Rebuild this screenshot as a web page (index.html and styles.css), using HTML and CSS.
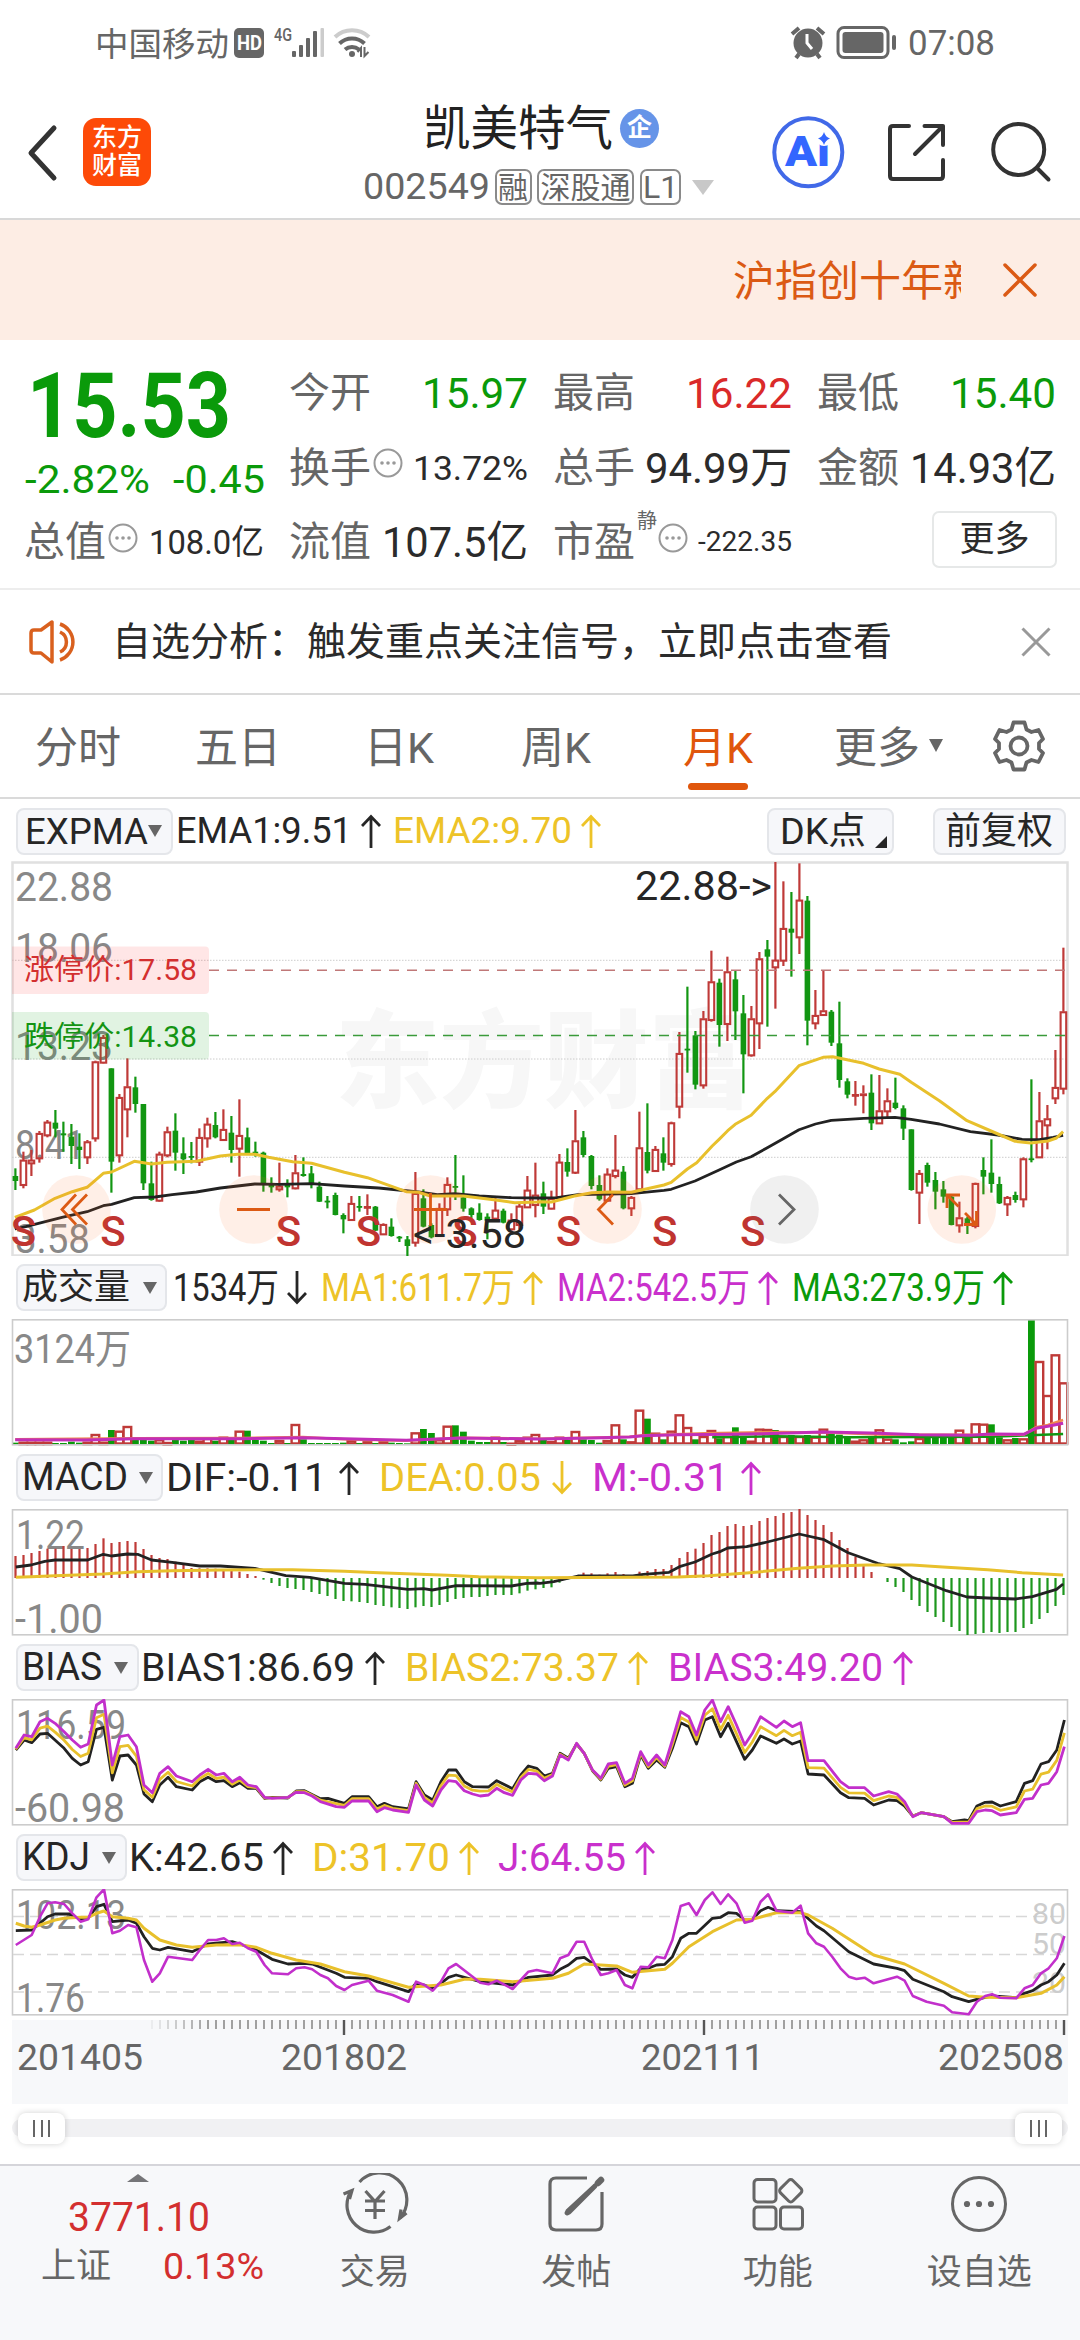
FILE: index.html
```html
<!DOCTYPE html>
<html lang="zh-CN">
<head>
<meta charset="utf-8">
<title>凯美特气 002549</title>
<link rel="stylesheet" href="styles.css">
</head>
<body>
<div class="status">
  <span class="carrier">中国移动</span>
  <span class="hd"><span class="fit" data-w="25">HD</span></span>
  <svg class="net" width="100" height="36" viewBox="272 24 100 36">
    <text class="net-4g" x="274" y="41" textLength="18" lengthAdjust="spacingAndGlyphs">4G</text>
    <g fill="#666"><rect x="292" y="51" width="4" height="6" rx="1"/><rect x="299" y="45" width="4" height="12" rx="1"/><rect x="306" y="38" width="4" height="19" rx="1"/><rect x="313" y="31" width="4" height="26" rx="1"/></g>
    <rect x="320.500" y="28" width="3.500" height="29" rx="1" fill="#ccc"/>
    <g fill="none" stroke-width="4">
      <path d="M335 37a25 25 0 0 1 34 0" stroke="#ccc"/><path d="M339.500 43.500a18 18 0 0 1 25 0" stroke="#666"/><path d="M345 49.500a11 11 0 0 1 14 0" stroke="#666"/>
    </g>
    <circle cx="352" cy="54" r="3" fill="#666"/>
    <path d="M357.500 52l3.500-4v9M364.500 47v9l4-4" stroke="#666" stroke-width="2" fill="none"/>
  </svg>
  <span class="grow"></span>
  <svg width="110" height="36" viewBox="786 24 110 36">
    <circle cx="806" cy="43" r="14.500" fill="#666"/>
    <path d="M790 34l7-6M822 34l-7-6M797 54l-3 4M815 54l3 4" stroke="#666" stroke-width="4" fill="none"/>
    <path d="M805 34v9l5 6" stroke="#fff" stroke-width="3" fill="none"/>
    <rect x="836" y="27.500" width="50" height="30" rx="6" fill="none" stroke="#666" stroke-width="3"/>
    <rect x="840.500" y="32" width="41" height="21" rx="3" fill="#666"/>
    <rect x="890" y="35" width="4" height="15" rx="2" fill="#666"/>
  </svg>
  <span class="clock"><span class="fit" data-w="87">07:08</span></span>
</div>

<header class="head">
  <svg class="back" width="32" height="60" viewBox="0 0 32 60"><path d="M28 5L5 30L28 55" fill="none" stroke="#333" stroke-width="5" stroke-linecap="round" stroke-linejoin="round"/></svg>
  <div class="logo">东方<br>财富</div>
  <div class="title">
    <div class="name">凯美特气<span class="corp">企</span></div>
    <div class="code"><span class="fit" data-w="127">002549</span><b>融</b><b>深股通</b><b class="l1">L1</b><i></i></div>
  </div>
  <svg class="acts" width="290" height="90" viewBox="765 107 290 90">
    <circle cx="808.300" cy="152.300" r="34" fill="#fff" stroke="#4169e8" stroke-width="4"/>
    <text class="ai" x="785" y="166" textLength="45" lengthAdjust="spacingAndGlyphs">Ai</text>
    <circle cx="824" cy="138" r="8" fill="#fff"/>
    <path d="M824 132q1.500 5 6 6.500q-4.500 1.500-6 6.500q-1.500-5-6-6.500q4.500-1.500 6-6.500z" fill="#3366ff"/>
    <g fill="none" stroke="#333" stroke-width="4" stroke-linecap="round" stroke-linejoin="round">
      <path d="M909 126H893Q890 126 890 129V176Q890 179 893 179H940Q943 179 943 176V160"/>
      <path d="M924.500 126H943V145M943 126L915 154"/>
      <circle cx="1018.700" cy="149.500" r="25.500"/><path d="M1037 168L1048.500 179.500"/>
    </g>
  </svg>
</header>

<div class="banner">
  <div class="marquee">沪指创十年新高</div>
  <svg width="34" height="34" viewBox="0 0 34 34"><path d="M2 2L32 32M32 2L2 32" stroke="#db5a14" stroke-width="3.500" stroke-linecap="round"/></svg>
</div>

<section class="quote">
  <div class="c1">
    <div class="price"><span class="fit" data-w="204">15.53</span></div>
    <div class="chg"><span class="fit" data-w="125">-2.82%</span><span class="fit" data-w="92">-0.45</span></div>
    <div class="cell"><label>总值</label><svg class="dot"><use href="#more"/></svg><span class="v sm fit" data-w="115">108.0亿</span></div>
  </div>
  <div class="stats">
    <div class="cell"><label>今开</label><span class="v g fit" data-w="106">15.97</span></div>
    <div class="cell"><label>最高</label><span class="v r fit" data-w="106">16.22</span></div>
    <div class="cell"><label>最低</label><span class="v g fit" data-w="106">15.40</span></div>
    <div class="cell"><label>换手</label><svg class="dot"><use href="#more"/></svg><span class="v sm fit" data-w="115">13.72%</span></div>
    <div class="cell"><label>总手</label><span class="v fit" data-w="147">94.99万</span></div>
    <div class="cell"><label>金额</label><span class="v fit" data-w="146">14.93亿</span></div>
    <div class="cell"><label>流值</label><span class="v fit" data-w="146">107.5亿</span></div>
    <div class="cell"><label>市盈</label><sup>静</sup><svg class="dot"><use href="#more"/></svg><span class="v xs fit" data-w="94">-222.35</span></div>
    <div class="cell"><span class="morebtn">更多</span></div>
  </div>
</section>

<div class="notice">
  <svg width="56" height="50" viewBox="26 617 56 50" fill="none" stroke="#d9601e" stroke-width="3.500" stroke-linejoin="round"><path d="M52 622V662L41 653H34Q31 653 31 650V633Q31 630 34 630H41Z"/><path d="M60 624A19 19 0 0 1 60 660M60 632A11 11 0 0 1 60 652"/></svg>
  <p>自选分析：触发重点关注信号，立即点击查看</p>
  <svg width="32" height="32" viewBox="0 0 32 32"><path d="M2.500 2.500L29.500 29.500M29.500 2.500L2.500 29.500" stroke="#999" stroke-width="3"/></svg>
</div>

<nav class="tabs">
  <span>分时</span><span>五日</span><span>日K</span><span>周K</span><span class="on">月K</span><span class="mo">更多<i></i></span>
  <svg width="54" height="54" viewBox="-27 -27 54 54" fill="none" stroke="#666" stroke-width="3.800" stroke-linejoin="round"><path d="M-5.500 -23.500H5.500L7.500 -16.500L12.500 -14L19.500 -16L24 -7L20 -3V3L24 7L19.500 16L12.500 14L7.500 16.500L5.500 23.500H-5.500L-7.500 16.500L-12.500 14L-19.500 16L-24 7L-20 3V-3L-24 -7L-19.500 -16L-12.500 -14L-7.500 -16.500Z"/><circle r="8.500"/></svg>
</nav>

<main>
  <div class="legend l-expma">
    <span class="pill"><span class="fit" data-w="123">EXPMA</span><i></i></span>
    <div class="reads"><span class="k"><span class="fit" data-w="176">EMA1:9.51</span><svg class="ar"><use href="#up"/></svg></span><span class="y"><span class="fit" data-w="179">EMA2:9.70</span><svg class="ar"><use href="#up"/></svg></span></div>
    <span class="pill dk"><span class="fit" data-w="86">DK点</span><u></u></span><span class="pill fq"><span class="fit" data-w="108">前复权</span></span>
  </div>
  <svg class="panel" id="kline" width="1080" height="395" viewBox="0 861 1080 395"></svg>
  <div class="legend l-vol">
    <span class="pill"><span class="fit" data-w="108">成交量</span><i></i></span>
    <div class="reads"><span class="k"><span class="fit" data-w="106">1534万</span><svg class="ar"><use href="#down"/></svg></span><span class="y"><span class="fit" data-w="194">MA1:611.7万</span><svg class="ar"><use href="#up"/></svg></span><span class="m"><span class="fit" data-w="193">MA2:542.5万</span><svg class="ar"><use href="#up"/></svg></span><span class="g"><span class="fit" data-w="193">MA3:273.9万</span><svg class="ar"><use href="#up"/></svg></span></div>
  </div>
  <svg class="panel" id="vol" width="1080" height="127" viewBox="0 1319 1080 127"></svg>
  <div class="legend l-macd">
    <span class="pill"><span class="fit" data-w="106">MACD</span><i></i></span>
    <div class="reads"><span class="k"><span class="fit" data-w="161">DIF:-0.11</span><svg class="ar"><use href="#up"/></svg></span><span class="y"><span class="fit" data-w="162">DEA:0.05</span><svg class="ar"><use href="#down"/></svg></span><span class="m"><span class="fit" data-w="137">M:-0.31</span><svg class="ar"><use href="#up"/></svg></span></div>
  </div>
  <svg class="panel" id="macd" width="1080" height="127" viewBox="0 1509 1080 127"></svg>
  <div class="legend l-bias">
    <span class="pill"><span class="fit" data-w="80">BIAS</span><i></i></span>
    <div class="reads"><span class="k"><span class="fit" data-w="214">BIAS1:86.69</span><svg class="ar"><use href="#up"/></svg></span><span class="y"><span class="fit" data-w="214">BIAS2:73.37</span><svg class="ar"><use href="#up"/></svg></span><span class="m"><span class="fit" data-w="215">BIAS3:49.20</span><svg class="ar"><use href="#up"/></svg></span></div>
  </div>
  <svg class="panel" id="bias" width="1080" height="127" viewBox="0 1699 1080 127"></svg>
  <div class="legend l-kdj">
    <span class="pill"><span class="fit" data-w="68">KDJ</span><i></i></span>
    <div class="reads"><span class="k"><span class="fit" data-w="135">K:42.65</span><svg class="ar"><use href="#up"/></svg></span><span class="y"><span class="fit" data-w="138">D:31.70</span><svg class="ar"><use href="#up"/></svg></span><span class="m"><span class="fit" data-w="128">J:64.55</span><svg class="ar"><use href="#up"/></svg></span></div>
  </div>
  <svg class="panel" id="kdj" width="1080" height="127" viewBox="0 1889 1080 127"></svg>
  <svg class="panel" id="axis" width="1080" height="88" viewBox="0 2016 1080 88"></svg>
  <div class="slider"><div class="track"><span class="knob"><i></i><i></i><i></i></span><span class="knob"><i></i><i></i><i></i></span></div></div>
</main>

<footer class="bottom">
  <div class="index">
    <i></i>
    <div class="pt"><span class="fit" data-w="142">3771.10</span></div>
    <div class="sz"><em>上证</em><span class="fit" data-w="101">0.13%</span></div>
  </div>
  <div class="act">
    <svg width="70" height="62" viewBox="-35 -31 70 62" fill="none" stroke="#666" stroke-width="3.200"><path d="M-15.500 -22A27 27 0 0 1 25 14M15.500 22.500A27 27 0 0 1 -24 -13"/><path d="M31.500 9L24.500 14.500L26 5.500M-31.500 -10L-23 -13.500L-25.500 -5"/><path d="M-9.500 -13L0 -2.500L9.500 -13M0 -2.500V15M-10 -3H10M-10 6.500H10"/></svg>
    <span>交易</span>
  </div>
  <div class="act">
    <svg width="62" height="62" viewBox="-31 -31 62 62" fill="none" stroke="#666" stroke-width="3.200"><path d="M11 -26H-20Q-26 -26 -26 -20V20Q-26 26 -20 26H20Q26 26 26 20V-12"/><path d="M19 -18L-7 8L-9 9L-8 7Z" stroke-width="5" fill="#666" stroke-linejoin="round"/><path d="M22 -21L25 -24" stroke-width="6.500" stroke-linecap="round"/></svg>
    <span>发帖</span>
  </div>
  <div class="act">
    <svg width="62" height="62" viewBox="-31 -31 62 62" fill="none" stroke="#666" stroke-width="3"><rect x="-24" y="-24.500" width="22" height="22.500" rx="3.500"/><rect x="-24" y="3" width="22" height="22" rx="3.500"/><rect x="2.500" y="3" width="22" height="22" rx="3.500"/><rect x="4" y="-22" width="17.500" height="17.500" rx="3" transform="rotate(45 12.750 -13.250)"/></svg>
    <span>功能</span>
  </div>
  <div class="act">
    <svg width="62" height="62" viewBox="-31 -31 62 62"><circle r="26.500" fill="none" stroke="#666" stroke-width="3"/><g fill="#666"><circle cx="-12" r="3.100"/><circle r="3.100"/><circle cx="12" r="3.100"/></g></svg>
    <span>设自选</span>
  </div>
</footer>

<svg class="defs" width="0" height="0">
  <symbol id="up" viewBox="0 0 20 34"><path d="M10 34V3M1 12L10 2.500L19 12" fill="none" stroke="currentColor" stroke-width="2.800"/></symbol>
  <symbol id="down" viewBox="0 0 20 34"><path d="M10 0V31M1 22L10 31.500L19 22" fill="none" stroke="currentColor" stroke-width="2.800"/></symbol>
  <symbol id="more" viewBox="0 0 30 30"><circle cx="15" cy="15" r="13.500" fill="none" stroke="#999" stroke-width="2"/><g fill="#999"><circle cx="9" cy="15" r="1.800"/><circle cx="15" cy="15" r="1.800"/><circle cx="21" cy="15" r="1.800"/></g></symbol>
</svg>
<script src="charts.js"></script>
</body>
</html>
```
FILE: styles.css
```css
* { box-sizing: border-box; }
body { margin: 0; width: 1080px; height: 2340px; overflow: hidden; background: #fff; color: #2b2b2b; font-family: Roboto, "Noto Sans CJK SC", sans-serif; }
svg { display: block; flex: none; }
i, em { font-style: normal; }
.defs { position: absolute; }
.fit { display: inline-block; white-space: nowrap; transform-origin: 0 50%; flex: none; }
.grow { flex: 1; }
.g { color: #0a9a0a; }
.r { color: #da2a2a; }
.k { color: #262626; }
.y { color: #edc328; }
.m { color: #c930cc; }

.status { height: 88px; padding: 0 85px 0 95px; display: flex; align-items: center; color: #666; }
.carrier { font-size: 33.500px; line-height: 40px; width: 139px; margin-top: 1px; }
.hd { width: 30px; height: 30px; border-radius: 5px; background: #666; color: #fff; font-size: 20px; font-weight: 700; line-height: 30px; padding-left: 2.500px; margin: -2px 8px 0 0; }
.net { margin-top: -2px; }
.net-4g { font-size: 19px; font-weight: 500; fill: #666; }
.status svg { margin-top: -4px; }
.clock { font-size: 35px; line-height: 40px; margin-left: 10px; }

.head { height: 132px; border-bottom: 2px solid #d8d8d8; display: flex; align-items: flex-start; padding-left: 26px; }
.back { margin-top: 35px; }
.logo { margin: 30px 0 0 25px; width: 68px; height: 68px; border-radius: 13px; background: #fd4a08; color: #fff; font-size: 25px; font-weight: 500; line-height: 28px; text-align: center; padding-top: 6px; }
.title { width: 350px; margin: 13px 0 0 212px; }
.name { display: flex; align-items: center; font-size: 47.500px; line-height: 56px; color: #222; padding-left: 60px; }
.corp { width: 39px; height: 39px; border-radius: 50%; background: #6694e8; color: #fff; font-size: 25px; font-weight: 700; line-height: 38px; text-align: center; margin: -2px 0 0 7px; }
.code { display: flex; align-items: center; font-size: 37px; line-height: 40px; color: #666; margin-top: 10px; white-space: nowrap; }
.code b { flex: none; font-weight: 400; font-size: 30px; height: 36px; line-height: 33px; border: 2px solid #8a8a8a; border-radius: 7px; padding: 0 1.500px; margin-left: 5.500px; }
.code .fit { margin-right: -1px; }
.code .l1 { width: 41px; text-align: center; font-size: 32px; }
.code i { border: 11px solid transparent; border-top: 15px solid #c8c8c8; border-bottom: 0; margin-left: 11px; }
.acts { margin: 19px 0 0 52px; }
.ai { font-size: 42px; font-weight: 900; fill: #3366ff; }

.banner { height: 120px; background: #fdede4; display: flex; align-items: center; padding-left: 733px; color: #db5a14; }
.marquee { width: 228px; overflow: hidden; white-space: nowrap; font-size: 42px; line-height: 60px; margin: 3px 42px 0 0; }

.quote { height: 250px; border-bottom: 2px solid #ededed; display: flex; }
.c1 { width: 289px; padding-left: 25px; }
.price { font-size: 90px; font-weight: 700; line-height: 96px; color: #0a9a0a; margin: 19px 0 0 2px; }
.chg { display: flex; justify-content: space-between; width: 240px; font-size: 39px; line-height: 50px; margin: 0 0 0 0; color: #0a9a0a; }
.stats { display: grid; grid-template-columns: 238px 238px 238px; column-gap: 26px; grid-auto-rows: 74.500px; margin-top: 16px; height: 224px; }
.cell { display: flex; align-items: center; height: 74px; }
.c1 .cell { width: 239px; margin-left: -1px; }
.cell label { font-size: 41px; line-height: 60px; color: #666; }
.v { margin: 0 -1px 0 auto; font-size: 43px; line-height: 60px; }
.sm { font-size: 34px; }
.xs { font-size: 28px; }
.dot { width: 30px; height: 30px; margin: -9px 0 0 2px; }
.cell sup { font-size: 20px; line-height: 20px; align-self: flex-start; margin: 6px 0 0 2px; color: #666; }
.cell sup + .dot { margin-left: 1px; }
.morebtn { width: 125px; height: 57px; margin: -6px -2px 0 auto; border: 2px solid #e6e8e8; border-radius: 7px; font-size: 35px; line-height: 54px; text-align: center; }

.notice { height: 105px; border-bottom: 2px solid #dadada; display: flex; align-items: center; padding-left: 26px; }
.notice p { margin: 1px 0 0 30px; width: 908px; font-size: 39px; line-height: 56px; }

.tabs { height: 104px; border-bottom: 2px solid #dadada; display: flex; align-items: center; font-size: 43px; line-height: 64px; color: #666; padding-left: 35px; }
.tabs span { width: 163px; height: 60px; }
.tabs span:nth-child(1) { width: 160px; }
.tabs span:nth-child(2) { width: 169px; }
.tabs span:nth-child(3) { width: 157px; }
.tabs span:nth-child(4) { width: 162px; }
.tabs .on { width: 151px; color: #e0560c; }
.tabs .on::after { content: ""; display: block; width: 60px; height: 7px; border-radius: 4px; background: #e0560c; margin: 3px 0 0 5px; }
.tabs .mo { display: flex; align-items: center; width: 158px; padding-top: 3px; }
.mo i { border: 7.500px solid transparent; border-top: 13px solid #666; border-bottom: 0; margin: -5px 0 0 9px; }

.legend { height: 63px; display: flex; align-items: center; padding-left: 16px; font-size: 39px; line-height: 46px; }
.l-expma { font-size: 37px; height: 62px; padding-top: 2px; }
.pill { height: 47px; border: 2px solid #e4e6ea; border-radius: 8px; background: #f6f7fa; display: flex; align-items: center; padding-left: 4px; color: #262626; line-height: 43px; }
.pill i { border: 7.500px solid transparent; border-top: 12px solid #666; border-bottom: 0; }
.reads, .reads > span { display: flex; align-items: center; }
.ar { width: 20px; height: 34px; }
.l-expma .pill:first-child { width: 157px; padding-left: 7px; }
.l-expma .reads { margin-left: 3px; gap: 12px; width: 591px; }
.l-expma .reads > span { gap: 9px; }
.l-expma .dk { width: 127px; padding-left: 11px; }
.l-expma .dk u { border-left: 12px solid transparent; border-bottom: 12px solid #262626; margin: 22px 0 0 9px; }
.l-expma .fq { width: 133px; padding-left: 10px; margin-left: 39px; }
.l-vol .pill { width: 151px; font-size: 35px; }
.l-vol .pill i { margin-left: 13px; }
.l-vol .reads { margin-left: 6px; gap: 14.500px; }
.l-vol .reads > span { gap: 7.500px; }
.l-macd .pill { width: 147px; font-size: 38px; }
.l-macd .pill i { margin-left: 11px; }
.l-macd .reads { margin-left: 3px; gap: 20px; }
.l-macd .reads > span { gap: 11.500px; }
.l-bias .pill { width: 123px; font-size: 38px; }
.l-bias .pill i { margin-left: 12px; }
.l-bias .reads { margin-left: 2px; gap: 20px; }
.l-bias .reads > span { gap: 9.500px; }
.l-kdj .pill { width: 111px; font-size: 38px; }
.l-kdj .pill i { margin-left: 12px; }
.l-kdj .reads { margin-left: 2px; gap: 19px; }
.l-kdj .reads > span { gap: 9px; }

.panel text { font-size: 40px; fill: #888; }
.panel .wm { font-size: 106px; font-weight: 900; fill: #f7f7f7; }
.panel .lim { font-size: 29px; }
.panel .dark { fill: #262626; }
.panel .s { font-weight: 500; font-size: 42px; fill: #c03430; text-anchor: middle; }
.panel .lvl { font-size: 30px; fill: #ccc; }
.panel .date { font-size: 37px; fill: #666; }

.slider { height: 60px; padding: 15px 12px 0; }
.track { height: 18px; border-radius: 9px; background: #f1f1f3; display: flex; justify-content: space-between; align-items: center; padding: 0 6px; }
.knob { width: 47px; height: 31px; border-radius: 8px; background: #fff; box-shadow: 0 0 6px rgba(0,0,0,.18); display: flex; gap: 5.500px; justify-content: center; align-items: center; }
.knob i { width: 2px; height: 17px; background: #666; }

.bottom { height: 176px; border-top: 2px solid #d5d5da; background: #f7f8fa; display: flex; }
.index { width: 274px; }
.index > i { display: block; width: 0; border: 11px solid transparent; border-bottom: 8px solid #757578; border-top: 0; margin: 8px 0 0 127px; }
.pt { font-size: 41px; line-height: 50px; color: #d32f2f; margin: 10px 0 0 68px; }
.sz { display: flex; justify-content: space-between; width: 223px; margin: 0 0 0 41px; font-size: 36px; line-height: 50px; color: #d32f2f; }
.sz em { color: #666; font-size: 35px; }
.act { width: 201.500px; display: flex; flex-direction: column; align-items: center; padding-top: 7px; font-size: 35px; line-height: 50px; color: #666; }
.act span { margin-top: 13px; }
```
FILE: charts.js
```js
// Squeeze or stretch each marked label to its column width.
for (const el of document.querySelectorAll('.fit')) {
  const w = +el.dataset.w, n = el.getBoundingClientRect().width;
  el.style.width = w + 'px';
  el.style.transform = `scaleX(${w / n})`;
}

const RED = '#bf3a38', GREEN = '#129612';
const cx = i => 15.4 + 8 * i;
const K = 2.904;
const rect = (x, y, w, h, a) => `<rect x="${x.toFixed(2)}" y="${y.toFixed(2)}" width="${w.toFixed(2)}" height="${h.toFixed(2)}" ${a}/>`;
const text = (x, y, w, s, c = '') => `<text x="${x}" y="${y}" textLength="${w}" lengthAdjust="spacingAndGlyphs" class="${c}">${s}</text>`;
const put = (id, s) => { document.getElementById(id).innerHTML = s; };
const parse = s => s.trim().split(/\s+/).map(p => p.split(',').map(Number));
const scale = (s, x0, y0, k) => parse(s).map(([x, y]) => [x0 + x / k, y0 + y / 3]);
const line = (pts, c, w = 3) => `<polyline points="${pts.map(p => p[0].toFixed(1) + ',' + p[1].toFixed(1)).join(' ')}" fill="none" stroke="${c}" stroke-width="${w}" stroke-linejoin="round"/>`;
const frame = (y, h, c = '#ccc', w = 2) => rect(12.5, y, 1055, h, `fill="none" stroke="${c}" stroke-width="${w}"`);

// Monthly candles: direction, high, body top, body bottom, low.
const candles = `g955,978,993,1020 r905,930,1005,1015 r900,930,940,978 r843,850,925,938 r810,816,856,862 g780,818,836,862 g815,850,856,905 g822,860,888,942 g850,890,900,957 r870,875,922,942
r632,635,865,875 r555,562,638,640 g655,655,935,1028 r732,742,916,938 r625,710,778,862 g680,712,762,788 g762,762,1000,1020 g935,1000,1050,1052 r905,912,1052,1055 r830,845,916,922
g790,842,908,962 g862,910,928,972 g876,918,922,940 r835,862,935,948 r803,822,865,893 g786,825,862,865 r778,838,870,873 g798,848,900,938 r748,856,896,980 g833,862,910,912
g875,905,908,920 g905,908,1000,1025 g982,1005,1012,1028 r938,1008,1018,1025 g988,1005,1012,1042 r915,968,1015,1018 g922,972,978,980 g948,970,1000,1015 g995,1010,1055,1056 g1038,1052,1056,1075
g1028,1035,1095,1096 g1090,1095,1108,1150 r1038,1060,1110,1112 g1038,1068,1073,1085 r1033,1068,1073,1095 g1068,1070,1142,1143 r1120,1123,1153,1155 g1105,1130,1158,1160 g1158,1160,1164,1176 g1158,1168,1188,1218
r966,1030,1178,1190 g1018,1045,1130,1132 g1120,1125,1162,1165 r1060,1075,1158,1160 r982,1003,1078,1098 g915,1008,1012,1050 g976,1042,1076,1085 g1072,1075,1095,1110 g1060,1088,1110,1112 g1090,1100,1112,1168
r1043,1080,1106,1108 g1076,1082,1118,1120 r1090,1110,1138,1142 r1060,1068,1125,1138 r978,1020,1072,1073 r938,1035,1065,1102 g995,1030,1070,1092 r1022,1045,1076,1078 r912,936,1042,1045 g895,936,965,980
r780,872,968,972 g843,862,915,922 g915,918,1008,1018 g976,1005,1048,1052 r955,972,1052,1055 r855,960,978,985 g948,965,1075,1078 r1038,1042,1075,1098 r785,893,1018,1020 g760,906,962,970
r888,898,963,965 g862,910,938,962 r815,818,942,950 r546,610,770,805 g410,596,600,668 g543,556,704,718 r483,506,706,716 r302,395,510,515 g386,398,525,590 r320,365,522,573
g363,388,484,570 g435,490,613,730 r468,506,616,620 r306,326,520,597 g270,298,320,530 r36,330,352,476 r94,235,332,348 g126,236,248,380 r40,150,262,312 g138,152,512,586
r420,496,520,538 r362,482,495,498 g480,485,578,588 g455,580,690,713 g685,694,734,745 r693,732,738,767 r706,730,736,790 g673,728,820,840 r675,782,820,822 r715,752,784,805
g683,758,774,778 g766,775,836,870 g838,838,1020,1022 r960,970,1028,1122 g938,945,998,1010 g966,990,1025,1078 g993,1018,1040,1058 g1035,1040,1125,1126 r1055,1103,1126,1148 g1100,1105,1120,1152
r998,1000,1128,1135 g922,960,980,1033 g868,968,1002,1028 g980,1002,1060,1062 r1038,1042,1063,1098 g1025,1035,1050,1058 r922,926,1048,1072 g688,925,930,937 r726,812,922,924 r765,806,826,898 r600,712,745,762 r293,485,716,733`
  .trim().split(/\s+/).map(s => [s[0], ...s.slice(1).split(',').map(Number)]);

const join = (a, b, y0) => scale(a, 0, y0, K).concat(scale(b, 540, y0, K));

// ---- Price panel
{
  let s = text(335, 1099, 418, '东方财富', 'wm');
  s += frame(862.5, 393, '#e0e0e0', 2.5);
  for (const y of [960.3, 1059, 1157.3]) s += `<path d="M12 ${y}H1067" stroke="#ccc" stroke-width="1" stroke-dasharray="1.5 1.5"/>`;
  s += text(15, 901, 98, '22.88') + text(15, 962, 98, '18.06') + text(15, 1060, 98, '13.23') + text(15, 1158.5, 70, '8.41') + text(15, 1253, 75, '3.58');
  candles.forEach(([c, h, t, b, l], i) => {
    const x = cx(i), Y = v => 850 + v / 3, col = c === 'r' ? RED : GREEN;
    if (c === 'g') {
      s += rect(x - 1.1, Y(h), 2.2, (l - h) / 3, `fill="${col}"`) + rect(x - 2.8, Y(t), 5.6, Math.max(1.8, (b - t) / 3), `fill="${col}"`);
    } else {
      s += rect(x - 1.1, Y(h), 2.2, (t - h) / 3, `fill="${col}"`) + rect(x - 1.1, Y(b), 2.2, (l - b) / 3, `fill="${col}"`);
      s += b - t < 9 ? rect(x - 3.6, Y(t), 7.2, 2.8, `fill="${col}"`) : rect(x - 2.8, Y(t) + .6, 5.6, (b - t) / 3 - .6, `fill="none" stroke="${col}" stroke-width="2.1"`);
    }
  });
  s += line(join('43,1137 75,1130 180,1102 253,1085 300,1067 324,1063 390,1043 450,1041 500,1034 570,1026 640,1014 740,1002 810,1003 905,1001 1000,1008 1100,1014 1215,1026 1270,1034 1320,1031 1392,1038 1485,1043 1560,1044',
    '0,1044 50,1043 110,1034 200,1032 265,1031 360,1021 381,1018 450,993 520,960 570,936 613,920 660,893 705,867 752,839 800,822 846,811 940,805 1031,802 1078,808 1160,822 1250,845 1330,855 1400,868 1450,869 1490,862 1519,856', 850), '#222', 2.8);
  s += line(join('43,1102 100,1080 160,1045 210,1025 253,1012 300,970 324,966 390,934 440,942 485,937 570,934 640,918 690,913 740,913 780,922 850,935 905,940 1000,967 1067,983 1180,1025 1215,1027 1250,1038 1345,1038 1440,1050 1495,1058 1560,1056',
    '0,1055 33,1056 100,1038 150,1028 200,1026 265,1027 360,1005 381,997 428,957 455,938 500,888 520,868 545,842 567,823 613,796 660,745 682,725 752,647 822,622 850,620 940,640 985,657 1045,673 1078,697 1160,752 1240,812 1330,852 1380,874 1425,879 1475,873 1500,864 1519,845', 850), '#e8c02c', 3);
  for (const [y, c] of [[970.3, '#c07878'], [1035.5, '#3a9a3a']]) s += `<path d="M209 ${y}H1067" stroke="${c}" stroke-width="1.6" stroke-dasharray="10 8"/>`;
  s += `<path d="M12 946.500H205Q209 946.500 209 950.500V990Q209 994 205 994H12Z" fill="rgba(255,60,60,.13)"/><path d="M12 1012H205Q209 1012 209 1016V1055Q209 1059.500 205 1059.500H12Z" fill="rgba(20,160,30,.13)"/>`;
  s += text(24, 980, 173, '<tspan fill="#d32f2f">涨停价:17.58</tspan>', 'lim') + text(24, 1046.5, 173, '<tspan fill="#139413">跌停价:14.38</tspan>', 'lim');
  [23.5, 113, 288.5, 368.5, 465, 568.5, 664.7, 752.8].forEach(x => { s += `<text x="${x}" y="1246" class="s">S</text>`; });
  [76.5, 253.5, 430.5, 607.5, 961.8].forEach(x => { s += `<circle cx="${x}" cy="1209.500" r="34.300" fill="rgba(255,110,40,.11)"/>`; });
  s += '<circle cx="784.500" cy="1209.500" r="34.300" fill="rgba(110,110,110,.1)"/>';
  s += text(635, 899.5, 137, '22.88-&gt;', 'dark') + text(413, 1247.5, 113, '&lt;-3.58', 'dark');
  s += `<g fill="none" stroke="#dc5a14" stroke-width="2.800"><path d="M76 1194.500L62 1209.500L76 1224.500M87 1194.500L72.500 1209.500L87 1224.500"/><path d="M237 1209.500H270M414 1209.500H447M430.500 1193V1226"/><path d="M613 1194.500L598.500 1209.500L613 1224.500"/><path d="M947 1208V1195H960M947 1195L958.500 1206.500M964 1224.500H976.500V1211M976.500 1224.500L965 1213"/></g>`;
  s += '<path d="M779 1194.500L794 1209.500L779 1224.500" fill="none" stroke="#666" stroke-width="2.800"/>';
  put('kline', s);
}

// ---- Volume panel
{
  const tops = [398,395,395,395,395,399,399,395,398,395,372,395,360,362,348,382,390,392,388,396,390,392,390,392,384,392,380,388,362,362,390,392,399,390,399,342,388,399,399,399,399,398,390,399,394,399,394,398,399,400,367,357,369,388,347,346,365,392,396,396,380,396,398,390,380,372,
    390,393,380,390,363,388,390,398,390,343,388,394,299,326,368,388,362,313,351,388,378,360,385,378,352,384,392,356,357,360,378,375,378,375,380,356,372,374,380,392,388,378,358,386,388,397,394,384,380,384,384,384,359,384,340,341,343,382,388,384,385,30,153,255,133,217];
  const flip = { 84: 'r', 94: 'r', 95: 'g', 121: 'r', 29: 'g' };
  let s = text(14, 1362.7, 117, '3124万'), top = '';
  tops.forEach((v, i) => {
    const c = flip[i] || candles[i][0], x = cx(i), y = 1310 + v / 3, h = 1444 - y;
    if (c === 'g') s += rect(x - 3.4, y, 6.8, h, 'fill="#0a9a0a"');
    else top += rect(x - 3.8, y + 1, 7.6, Math.max(1.5, h - 1.5), `fill="#fff" stroke="${RED}" stroke-width="2.4"`);
  });
  s += top + frame(1319.8, 125, '#ccc', 1.6);
  s += line(scale('500,382 680,379 900,382 1300,380 1519,372', 540, 1310, K), GREEN, 2.6);
  s += line(join('44,388 390,385 700,384 880,381 1000,388 1180,392 1340,383 1560,386', '0,386 260,380 300,376 480,370 700,366 850,368 1000,374 1100,374 1405,374 1440,352 1475,345 1519,330', 1310), '#f08a50', 2.6);
  s += line(join('44,389 250,390 390,386 700,386 880,383 1000,386 1180,391 1340,384 1560,387', '0,387 150,384 260,381 300,377 400,374 560,373 700,370 820,366 960,369 1100,374 1250,376 1310,372 1405,373 1440,355 1475,349 1519,340', 1310), '#c22fb8', 3);
  put('vol', s);
}

// ---- MACD panel
{
  const bars = [738,735,729,723,716,716,708,717,717,714,702,685,699,696,693,696,717,735,744,747,755,765,774,775,775,776,778,781,785,792,798,809,819,828,834,837,840,846,852,858,867,873,874,876,879,885,888,892,894,897,892,888,891,885,876,867,864,861,861,858,855,855,855,850,842,838,
    834,832,818,808,803,788,790,794,790,786,792,795,785,783,777,777,765,744,726,716,699,675,666,648,642,648,645,633,624,618,609,606,597,615,630,645,666,690,714,740,762,786,804,816,831,846,870,888,906,921,936,951,963,975,972,969,966,969,966,966,954,942,927,909,888,855];
  let s = frame(1509.8, 125, '#ccc', 1.6) + text(16, 1549, 69, '1.22') + text(15, 1632.5, 88, '-1.00');
  bars.forEach((v, i) => { s += rect(cx(i) - 1, 1310 + Math.min(v, 804) / 3, 2.2, Math.abs(v - 804) / 3, `fill="${v < 804 ? RED : '#1d971d'}"`); });
  s += line(join('46,771 90,765 130,754 160,750 255,750 300,733 324,738 370,732 400,733 440,750 500,757 580,768 640,768 740,775 830,797 900,802 1000,820 1060,823 1185,838 1230,836 1255,840 1325,827 1485,828 1530,820 1560,819',
    '0,820 40,815 110,798 270,798 300,793 375,787 405,770 450,756 500,732 525,724 545,714 600,710 660,696 752,672 825,689 895,728 980,760 1045,776 1080,801 1180,842 1240,861 1300,864 1380,867 1430,860 1500,838 1519,822', 1310), '#222', 2.8);
  s += line(join('46,802 90,800 160,797 300,792 400,785 500,782 640,780 740,779 850,779 1000,784 1100,788 1200,792 1300,796 1390,800 1560,803',
    '0,803 400,801 490,797 600,789 750,775 850,768 950,765 1080,765 1170,771 1300,779 1400,788 1519,795', 1310), '#e8c02c', 3);
  put('macd', s);
}

const KX = 1.4515;
const at = (pts, x) => {
  const j = Math.max(1, pts.findIndex(p => p[0] >= x));
  const [a, b] = [pts[j - 1], pts[j]];
  return a[1] + (b[1] - a[1]) * (x - a[0]) / (b[0] - a[0]);
};

// ---- BIAS panel
{
  const m = scale('23,325 35,285 46,290 58,245 69,235 80,250 93,275 105,300 117,322 128,312 140,195 151,180 163,375 174,290 186,285 198,320 209,435 221,458 232,400 244,380 256,408 279,425 290,405 302,388 314,405 325,400 337,425 348,412 360,435 372,440 384,472 395,475 418,472 430,457 442,458 453,468 465,485 488,500 500,502 511,483 535,483 547,515 558,503 570,510 593,517 604,435 616,480 628,498 640,450 651,422 662,425 674,452 686,462 697,468 709,465 721,445 732,458 744,466 756,420 767,400 779,402 790,422 802,408 813,345 825,360 837,310 848,340 860,390 872,415 883,372 895,368 907,430 918,415 930,335 941,375 953,345 965,375 976,300 988,215 1000,230 1011,285 1023,210 1034,180 1046,245 1057,200 1069,255 1081,315 1092,280 1104,230 1127,262 1138,243 1150,260 1162,248 1173,362 1196,362 1220,425 1232,443 1255,443 1268,468 1290,455 1302,462 1313,485 1325,530 1337,518 1370,530 1382,550 1406,550 1418,515 1430,510 1440,512 1452,525 1475,518 1487,478 1499,475 1511,435 1522,430 1534,395 1545,320', 0, 1640, KX);
  const k = scale('23,330 35,300 46,308 58,282 69,280 93,325 105,355 117,375 128,365 140,268 151,262 163,420 174,348 186,345 198,375 209,462 221,485 232,435 244,412 256,440 279,450 290,425 302,412 314,425 325,422 337,440 348,428 360,445 372,445 384,475 395,472 418,474 430,453 442,452 465,476 476,475 500,490 511,470 535,470 547,500 558,490 570,500 593,507 604,425 616,465 628,480 640,425 651,390 662,390 674,425 686,440 709,441 721,422 744,446 756,405 767,378 779,385 790,408 802,400 813,340 825,355 837,312 848,340 860,392 872,420 883,385 895,380 907,440 918,430 930,345 941,385 953,360 965,382 976,325 988,248 1000,260 1011,312 1023,240 1034,230 1046,290 1057,250 1069,305 1081,358 1092,330 1104,288 1127,310 1138,297 1150,312 1162,303 1173,402 1196,405 1220,458 1232,473 1255,475 1268,495 1290,480 1302,482 1313,498 1325,528 1337,518 1370,530 1382,545 1400,540 1406,542 1418,498 1430,487 1440,486 1452,498 1475,485 1487,430 1499,422 1511,372 1522,365 1534,330 1545,240', 0, 1640, KX);
  const y = m.map(([x, v]) => [x, v * .48 + at(k, x) * .52]);
  put('bias', frame(1699.8, 125, '#ccc', 1.6) + text(16, 1738.7, 110, '116.59') + text(15, 1822, 110, '-60.98') + line(k, '#222', 2.8) + line(y, '#e8c02c', 2.8) + line(m, '#c22fcb', 2.8));
}

// ---- KDJ panel
{
  const j = scale('23,915 46,885 58,830 69,790 80,787 93,792 105,820 117,845 128,838 140,772 151,748 163,880 174,872 186,855 198,862 209,960 221,1025 232,1000 244,950 279,960 290,930 302,900 314,900 325,895 337,912 348,908 360,925 372,935 384,975 395,1000 418,1003 430,985 442,982 453,988 465,1005 476,1015 488,1038 500,1050 511,1035 535,1022 547,1052 570,1065 593,1085 604,1025 616,1035 628,1052 640,1025 651,985 662,972 686,1010 697,1028 709,1033 721,1022 744,1047 756,1020 767,995 779,990 802,1000 813,955 825,945 837,905 848,905 860,960 872,1005 883,1000 895,990 907,1035 918,1045 930,980 941,982 953,950 965,955 976,900 988,798 1000,790 1011,825 1023,780 1034,757 1046,792 1057,763 1069,790 1081,848 1092,842 1104,785 1115,763 1127,812 1150,818 1162,797 1173,880 1185,910 1196,920 1208,950 1220,985 1232,1010 1243,1017 1255,1013 1268,1030 1302,1010 1313,1022 1325,1068 1345,1085 1370,1097 1382,1117 1406,1123 1418,1085 1430,1068 1440,1063 1452,1073 1475,1075 1487,1045 1499,1035 1511,1000 1522,985 1534,955 1545,888', 0, 1640, KX);
  const k = scale('23,872 46,870 58,850 69,830 80,822 100,822 117,838 128,835 140,800 151,793 163,845 186,840 198,850 209,890 221,925 232,930 244,922 279,935 302,912 337,905 348,912 372,930 395,958 418,972 442,970 453,972 488,1000 500,1012 535,1015 547,1025 570,1040 593,1055 604,1030 616,1035 628,1045 640,1030 651,1012 662,1005 697,1025 744,1035 767,1012 802,1005 813,988 825,975 837,955 848,952 872,988 895,987 907,1005 918,1012 930,985 941,985 953,975 965,973 976,950 988,895 1000,880 1011,880 1034,835 1046,832 1057,818 1069,820 1081,840 1092,838 1104,812 1115,802 1127,812 1162,815 1185,858 1196,872 1232,935 1268,972 1302,985 1313,992 1325,1018 1370,1055 1382,1070 1406,1085 1418,1078 1440,1068 1475,1073 1487,1060 1499,1052 1511,1035 1522,1025 1534,1005 1545,970', 0, 1640, KX);
  const d = scale('23,850 35,858 46,862 58,855 80,840 93,835 117,832 128,832 140,820 151,813 163,830 186,835 198,840 209,865 232,900 256,915 279,922 314,915 348,914 372,922 395,940 430,960 465,972 500,995 535,1008 593,1042 640,1035 674,1018 697,1018 744,1025 802,1015 825,1000 848,972 872,975 895,978 918,997 965,988 976,970 1000,920 1034,875 1069,840 1092,838 1127,818 1162,818 1173,825 1208,865 1268,945 1313,972 1370,1030 1406,1068 1430,1072 1475,1073 1511,1060 1534,1035 1545,1010', 0, 1640, KX);
  let s = frame(1889.8, 125, '#ccc', 1.6);
  for (const y of [1916.5, 1954.5, 1992]) s += `<path d="M13 ${y}H1067" stroke="#d8d8d8" stroke-width="1.500" stroke-dasharray="11 6"/>`;
  s += text(1032, 1924, 34, '80', 'lvl') + text(1032, 1954, 34, '50', 'lvl') + text(1032, 1992.5, 34, '20', 'lvl');
  s += text(16, 1928.5, 110, '102.13') + text(16, 2012, 69, '1.76');
  put('kdj', s + line(k, '#222', 2.8) + line(d, '#e8c02c', 3) + line(j, '#c22fcb', 2.6));
}

// ---- Time axis
{
  let s = rect(12, 2020, 1056, 84, 'fill="#f7f8fa"');
  for (let i = 17; i < 132; i++) {
    const major = i === 41 || i === 86 || i === 131;
    s += rect(16 + 8 * i - (major ? 1.2 : .8), 2020, major ? 2.4 : 1.6, major ? 15 : 9, `fill="${major ? '#555' : '#8a8a8a'}" opacity="${Math.min(1, (i - 16) / 8)}"`);
  }
  s += text(17, 2069.5, 126, '201405', 'date') + text(281, 2069.5, 126, '201802', 'date') + text(641, 2069.5, 123, '202111', 'date') + text(938, 2069.5, 126, '202508', 'date');
  put('axis', s);
}
```
